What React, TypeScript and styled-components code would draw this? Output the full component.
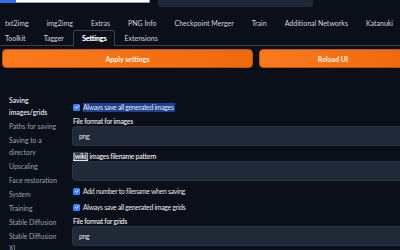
import React from 'react';
import styled, { createGlobalStyle } from 'styled-components';

const GlobalStyle = createGlobalStyle`
  html, body {
    margin: 0;
    padding: 0;
    background: #0b0f19;
    overflow: hidden;
  }
  body {
    font-family: Lato, "Noto Sans", sans-serif;
    color: #e5e7eb;
  }
`;

const Page = styled.div`
  width: 400px;
  height: 250px;
  overflow: hidden;
  background: #0b0f19;
`;

const TopBar = styled.div`
  display: flex;
  align-items: flex-start;
  height: 15px;
`;

const ModelSelect = styled.div`
  display: flex;
  width: 150px;
  height: 3px;

  .accent {
    width: 16px;
    background: #2f6fe8;
  }
  .field {
    flex: 1;
    background: #ffffff;
    border-bottom: 1px solid #9ca3af;
    border-right: 1px solid #9ca3af;
    border-radius: 0 0 2px 0;
  }
`;

const VaeBox = styled.div`
  margin-left: 8px;
  width: 155px;
  height: 7px;
  background: #1f2937;
  border-radius: 0 0 3px 3px;
`;

const TabNav = styled.div`
  display: flex;
  flex-direction: column;
  margin-left: -4px;
  border-bottom: 1px solid #374151;
`;

const TabRow = styled.div`
  display: flex;
  height: 15px;
`;

const Tab = styled.div<{ $active?: boolean }>`
  line-height: 14px;
  padding: 0 8px;
  font-size: 7px;
  white-space: nowrap;
  color: ${({ $active }) => ($active ? '#ffffff' : '#d1d5db')};
  font-weight: 400;
  box-sizing: border-box;
  border: 1px solid ${({ $active }) => ($active ? '#374151' : 'transparent')};
  border-bottom: none;
  border-radius: 3px 3px 0 0;
  margin-bottom: ${({ $active }) => ($active ? '-1px' : '0')};
  height: ${({ $active }) => ($active ? '16px' : '15px')};
  background: #0b0f19;
  text-shadow: ${({ $active }) => ($active ? '0.3px 0 0 #ffffff' : 'none')};
`;

const ButtonRow = styled.div`
  display: flex;
  gap: 6px;
  margin-top: 3px;
  padding-left: 2px;
`;

const OrangeButton = styled.div<{ $width: number }>`
  flex: none;
  width: ${({ $width }) => $width}px;
  height: 19px;
  box-sizing: border-box;
  display: flex;
  align-items: center;
  justify-content: center;
  background: linear-gradient(to right, #f97a1c, #ee6a0f);
  border: 1px solid #c2540a;
  border-radius: 4px;
  color: #fff3e8;
  font-size: 7px;
  font-weight: 700;
`;

const SettingsArea = styled.div`
  display: flex;
  margin-top: 25px;
`;

const Sidebar = styled.div`
  flex: none;
  width: 72px;
  padding: 0 9px 0 9px;
  box-sizing: border-box;
`;

const SideItem = styled.div<{ $active?: boolean }>`
  padding: 1px 0;
  line-height: 12px;
  font-size: 6.8px;
  color: ${({ $active }) => ($active ? '#e5e7eb' : '#9ca3af')};
  font-weight: ${({ $active }) => ($active ? 600 : 400)};
`;

const Main = styled.div`
  flex: 1;
  display: flex;
  flex-direction: column;
  font-size: 6.8px;
  letter-spacing: -0.25px;
`;

const CheckRow = styled.div<{ $mt: number }>`
  display: flex;
  align-items: center;
  gap: 3px;
  height: 12px;
  margin-top: ${({ $mt }) => $mt}px;
  padding-left: 1px;
  color: #e5e7eb;
`;

const CheckBox = styled.span`
  flex: none;
  width: 7px;
  height: 7px;
  border-radius: 1.5px;
  background: #3b82f6;
  display: flex;
  align-items: center;
  justify-content: center;
`;

const Selected = styled.span`
  background: #1d3f96;
  line-height: 9px;
  padding-right: 1px;
`;

const FieldLabel = styled.div<{ $mt: number }>`
  margin-top: ${({ $mt }) => $mt}px;
  padding-left: 1px;
  line-height: 9px;
  font-weight: 600;
  color: #e5e7eb;

  u {
    font-weight: 700;
    background: #374151;
  }
`;

const TextBox = styled.div`
  height: 20px;
  box-sizing: border-box;
  background: #1f2937;
  border: 1px solid #283244;
  border-radius: 4px 0 0 4px;
  border-right: none;
  padding-left: 6px;
  display: flex;
  align-items: center;
  color: #e5e7eb;
`;

const Check = () => (
  <CheckBox>
    <svg width="6" height="6" viewBox="0 0 12 12">
      <path d="M2.5 6.2 L5 8.6 L9.6 3.4" fill="none" stroke="#fff" strokeWidth="1.8" strokeLinecap="round" strokeLinejoin="round" />
    </svg>
  </CheckBox>
);

const tabsTop = ['txt2img', 'img2img', 'Extras', 'PNG Info', 'Checkpoint Merger', 'Train', 'Additional Networks', 'Katanuki'];
const tabsBottom = ['Toolkit', 'Tagger', 'Settings', 'Extensions'];

const sections = [
  'Saving images/grids',
  'Paths for saving',
  'Saving to a directory',
  'Upscaling',
  'Face restoration',
  'System',
  'Training',
  'Stable Diffusion',
  'Stable Diffusion XL',
];

export default function App() {
  return (
    <Page>
      <GlobalStyle />
      <TopBar>
        <ModelSelect>
          <div className="accent" />
          <div className="field" />
        </ModelSelect>
        <VaeBox />
      </TopBar>

      <TabNav>
        <TabRow>
          {tabsTop.map(t => (
            <Tab key={t}>{t}</Tab>
          ))}
        </TabRow>
        <TabRow>
          {tabsBottom.map(t => (
            <Tab key={t} $active={t === 'Settings'}>{t}</Tab>
          ))}
        </TabRow>
      </TabNav>

      <ButtonRow>
        <OrangeButton $width={251}>Apply settings</OrangeButton>
        <OrangeButton $width={148}>Reload UI</OrangeButton>
      </ButtonRow>

      <SettingsArea>
        <Sidebar>
          {sections.map((s, i) => (
            <SideItem key={s} $active={i === 0}>{s}</SideItem>
          ))}
        </Sidebar>
        <Main>
          <CheckRow $mt={8}>
            <Check />
            <Selected>Always save all generated images</Selected>
          </CheckRow>
          <FieldLabel $mt={4}>File format for images</FieldLabel>
          <TextBox>png</TextBox>
          <FieldLabel $mt={6}>
            <u>[wiki]</u> images filename pattern
          </FieldLabel>
          <TextBox />
          <CheckRow $mt={4}>
            <Check />
            <span>Add number to filename when saving</span>
          </CheckRow>
          <CheckRow $mt={4}>
            <Check />
            <span>Always save all generated image grids</span>
          </CheckRow>
          <FieldLabel $mt={4}>File format for grids</FieldLabel>
          <TextBox>png</TextBox>
        </Main>
      </SettingsArea>
    </Page>
  );
}
